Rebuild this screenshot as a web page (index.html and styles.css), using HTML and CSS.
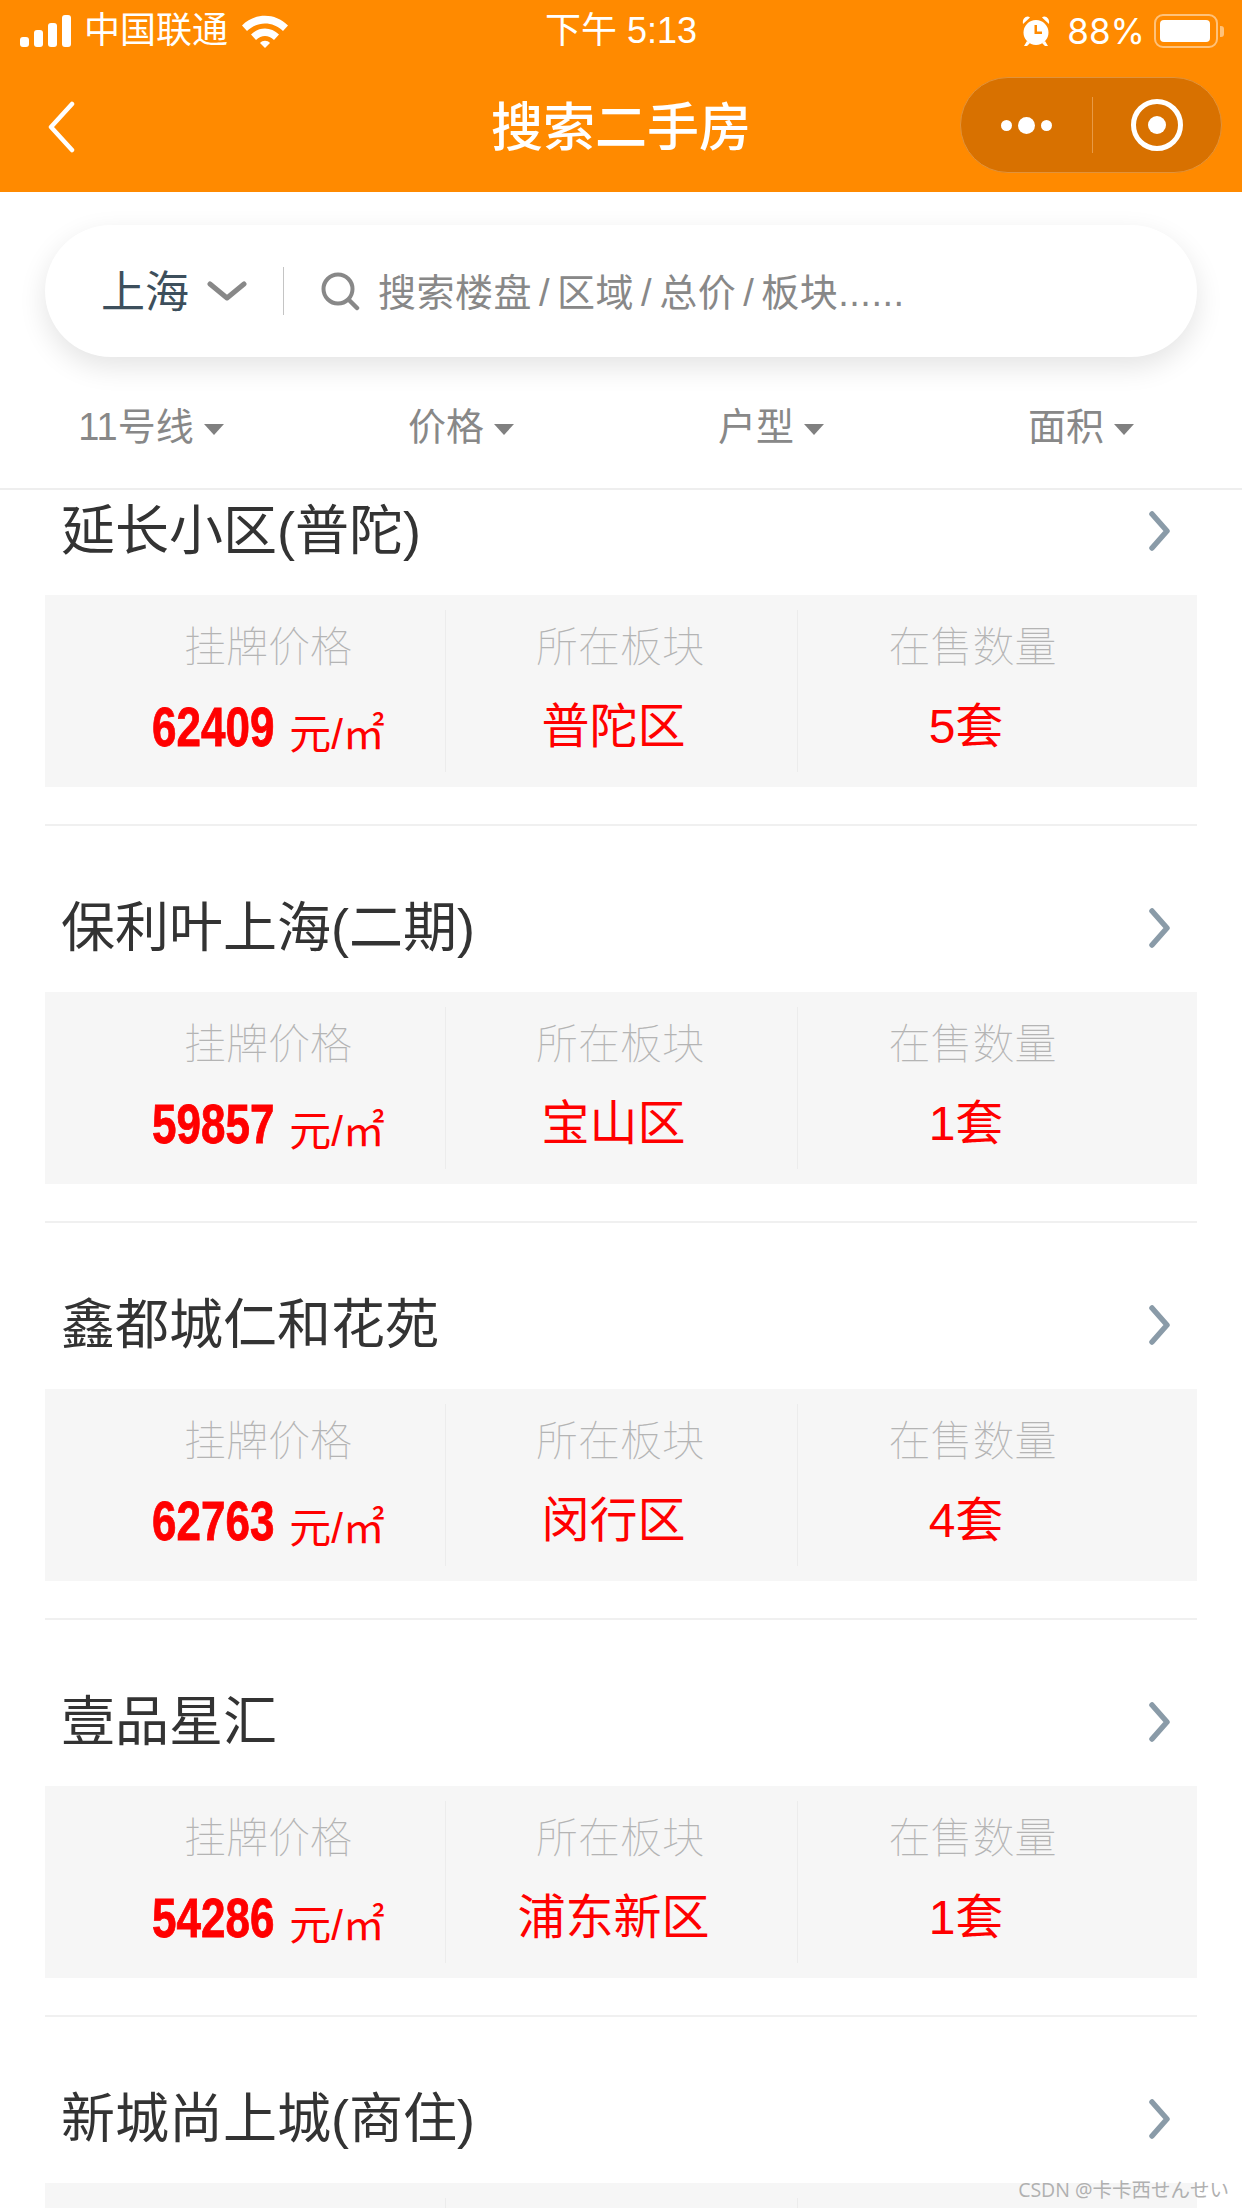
FILE: index.html

```html
<!DOCTYPE html>
<html lang="zh-CN">
<head>
  <meta charset="UTF-8" />
  <title>搜索二手房</title>
  <link rel="stylesheet" href="styles.css">
</head>
<body>
  <header class="top">
    <div class="status">
      <div class="status-left">
        <svg class="signal" width="51" height="32" viewBox="0 0 51 32"><rect x="0" y="22" width="9" height="10" rx="3"/><rect x="14" y="15" width="9" height="17" rx="3"/><rect x="28" y="8" width="9" height="24" rx="3"/><rect x="42" y="0" width="9" height="32" rx="3"/></svg>
        <span class="carrier">中国联通</span>
        <svg class="wifi" width="46" height="33" viewBox="0 0 46 33"><path d="M0 10.500C13-2.500 33-2.500 46 10.500L41 16C31 6 15 6 5 16Z"/><path d="M9 19.500C17 11.500 29 11.500 37 19.500L32 25C26.500 19.500 19.500 19.500 14 25Z"/><path d="M18 28C20.500 25 25.500 25 28 28L23 33Z"/></svg>
      </div>
      <span class="time">下午 5:13</span>
      <div class="status-right">
        <svg class="alarm" width="28" height="32" viewBox="0 0 28 32"><path d="M1 9L8 2.500C5 0 0 3 1 9ZM27 9L20 2.500C23 0 28 3 27 9Z"/><path fill-rule="evenodd" d="M14 5A12.500 12.500 0 1 1 14 30A12.500 12.500 0 1 1 14 5ZM12.500 10V19H20V16.500H15V10Z"/><path d="M5 26L2 31H5L8 28ZM23 26L26 31H23L20 28Z"/></svg>
        <span class="percent">88%</span>
        <div class="battery"><div class="battery-fill"></div></div>
        <div class="battery-tip"></div>
      </div>
    </div>
    <nav class="nav">
      <svg class="back" width="30" height="52" viewBox="0 0 30 52"><path d="M26 3L5 26L26 49" fill="none" stroke="#fff" stroke-width="4.500" stroke-linecap="round" stroke-linejoin="round"/></svg>
      <h1 class="nav-title">搜索二手房</h1>
      <div class="capsule">
        <div class="capsule-more"><i></i><b></b><i></i></div>
        <div class="capsule-line"></div>
        <div class="capsule-close"><span></span></div>
      </div>
    </nav>
  </header>

  <section class="search-wrap">
    <div class="search">
      <span class="city">上海</span>
      <svg class="city-arrow" width="40" height="20" viewBox="0 0 40 20"><path d="M3 3L20 17L37 3" fill="none" stroke="#888" stroke-width="5" stroke-linecap="round" stroke-linejoin="round"/></svg>
      <div class="search-line"></div>
      <svg class="search-icon" width="40" height="40" viewBox="0 0 40 40"><circle cx="18" cy="18" r="14.500" fill="none" stroke="#888" stroke-width="4"/><path d="M29 29L37 37" stroke="#888" stroke-width="4.500" stroke-linecap="round"/></svg>
      <span class="placeholder">搜索楼盘<span class="slash">/</span>区域<span class="slash">/</span>总价<span class="slash">/</span>板块......</span>
    </div>
  </section>

  <div class="filters">
    <div class="filter">11号线<span class="caret"></span></div>
    <div class="filter">价格<span class="caret"></span></div>
    <div class="filter">户型<span class="caret"></span></div>
    <div class="filter">面积<span class="caret"></span></div>
  </div>

  <main class="list">
    <div class="list-inner">
      <article class="item">
        <div class="item-head">
          <h2 class="item-name">延长小区(普陀)</h2>
          <svg class="more" width="22" height="40" viewBox="0 0 22 40"><path d="M3 3L18 20L3 37" fill="none" stroke="#8a9ba8" stroke-width="5.500" stroke-linecap="round" stroke-linejoin="round"/></svg>
        </div>
        <div class="info">
          <div class="cell"><div class="label">挂牌价格</div><div class="price"><span class="price-num">62409</span><span class="unit">元/㎡</span></div></div>
          <div class="cell"><div class="label">所在板块</div><div class="value">普陀区</div></div>
          <div class="cell"><div class="label">在售数量</div><div class="value">5套</div></div>
        </div>
      </article>
      <article class="item">
        <div class="item-head">
          <h2 class="item-name">保利叶上海(二期)</h2>
          <svg class="more" width="22" height="40" viewBox="0 0 22 40"><path d="M3 3L18 20L3 37" fill="none" stroke="#8a9ba8" stroke-width="5.500" stroke-linecap="round" stroke-linejoin="round"/></svg>
        </div>
        <div class="info">
          <div class="cell"><div class="label">挂牌价格</div><div class="price"><span class="price-num">59857</span><span class="unit">元/㎡</span></div></div>
          <div class="cell"><div class="label">所在板块</div><div class="value">宝山区</div></div>
          <div class="cell"><div class="label">在售数量</div><div class="value">1套</div></div>
        </div>
      </article>
      <article class="item">
        <div class="item-head">
          <h2 class="item-name">鑫都城仁和花苑</h2>
          <svg class="more" width="22" height="40" viewBox="0 0 22 40"><path d="M3 3L18 20L3 37" fill="none" stroke="#8a9ba8" stroke-width="5.500" stroke-linecap="round" stroke-linejoin="round"/></svg>
        </div>
        <div class="info">
          <div class="cell"><div class="label">挂牌价格</div><div class="price"><span class="price-num">62763</span><span class="unit">元/㎡</span></div></div>
          <div class="cell"><div class="label">所在板块</div><div class="value">闵行区</div></div>
          <div class="cell"><div class="label">在售数量</div><div class="value">4套</div></div>
        </div>
      </article>
      <article class="item">
        <div class="item-head">
          <h2 class="item-name">壹品星汇</h2>
          <svg class="more" width="22" height="40" viewBox="0 0 22 40"><path d="M3 3L18 20L3 37" fill="none" stroke="#8a9ba8" stroke-width="5.500" stroke-linecap="round" stroke-linejoin="round"/></svg>
        </div>
        <div class="info">
          <div class="cell"><div class="label">挂牌价格</div><div class="price"><span class="price-num">54286</span><span class="unit">元/㎡</span></div></div>
          <div class="cell"><div class="label">所在板块</div><div class="value">浦东新区</div></div>
          <div class="cell"><div class="label">在售数量</div><div class="value">1套</div></div>
        </div>
      </article>
      <article class="item">
        <div class="item-head">
          <h2 class="item-name">新城尚上城(商住)</h2>
          <svg class="more" width="22" height="40" viewBox="0 0 22 40"><path d="M3 3L18 20L3 37" fill="none" stroke="#8a9ba8" stroke-width="5.500" stroke-linecap="round" stroke-linejoin="round"/></svg>
        </div>
        <div class="info">
          <div class="cell"></div>
          <div class="cell"></div>
          <div class="cell"></div>
        </div>
      </article>
    </div>
  </main>

  <div class="watermark">CSDN @卡卡西せんせい</div>
</body>
</html>
```

FILE: styles.css

```css
* {
  box-sizing: border-box;
}
html, body {
  margin: 0;
  padding: 0;
}
body {
  position: relative;
  width: 1242px;
  height: 2208px;
  overflow: hidden;
  background: #fff;
  font-family: "Liberation Sans", "Noto Sans CJK SC", sans-serif;
}

/* orange top */
.top {
  height: 192px;
  background: #ff8a00;
  color: #fff;
}
.status {
  height: 62px;
  display: grid;
  grid-template-columns: 1fr auto 1fr;
  align-items: center;
  padding: 0 18px 0 20px;
}
.status svg {
  fill: #fff;
  display: block;
}
.status-left {
  display: flex;
  align-items: center;
}
.carrier {
  margin-left: 13px;
  font-size: 36px;
  line-height: 40px;
}
.wifi {
  margin-left: 14px;
}
.time {
  margin-right: 2px;
  font-size: 36px;
  line-height: 40px;
}
.status-right {
  display: flex;
  align-items: center;
  justify-content: flex-end;
}
.percent {
  margin-left: 17px;
  font-family: Inter, "Liberation Sans", sans-serif;
  font-size: 35px;
  line-height: 40px;
}
.battery {
  margin-left: 9px;
  width: 64px;
  height: 34px;
  padding: 4px;
  border: 2px solid #ffc27a;
  border-radius: 9px;
}
.battery-fill {
  width: 50px;
  height: 22px;
  background: #fff;
  border-radius: 4px;
}
.battery-tip {
  margin-left: 2px;
  width: 4px;
  height: 11px;
  background: #ffc27a;
  border-radius: 0 3px 3px 0;
}
.nav {
  height: 130px;
  display: grid;
  grid-template-columns: 1fr auto 1fr;
  align-items: center;
  padding: 0 20px;
}
.back {
  margin-left: 26px;
}
.nav-title {
  margin: 2px 0 0;
  font-size: 52px;
  line-height: 60px;
  font-weight: 500;
}
.capsule {
  justify-self: end;
  width: 262px;
  height: 96px;
  margin-bottom: 4px;
  display: flex;
  align-items: center;
  background: #d87100;
  border: 1px solid #e2933a;
  border-radius: 48px;
}
.capsule-more {
  width: 131px;
  display: flex;
  justify-content: center;
  align-items: center;
  gap: 6px;
}
.capsule-more i {
  width: 11px;
  height: 11px;
  background: #fff;
  border-radius: 50%;
}
.capsule-more b {
  width: 17px;
  height: 17px;
  background: #fff;
  border-radius: 50%;
}
.capsule-line {
  width: 1px;
  height: 56px;
  background: #e89a45;
}
.capsule-close {
  flex: 1;
  display: flex;
  justify-content: center;
}
.capsule-close span {
  width: 52px;
  height: 52px;
  display: flex;
  align-items: center;
  justify-content: center;
  border: 5px solid #fff;
  border-radius: 50%;
}
.capsule-close span::after {
  content: "";
  width: 18px;
  height: 18px;
  background: #fff;
  border-radius: 50%;
}

/* search */
.search-wrap {
  padding: 33px 45px 0;
}
.search {
  height: 132px;
  display: flex;
  align-items: center;
  padding-left: 56px;
  background: #fff;
  border-radius: 66px;
  box-shadow: 0 10px 28px rgba(0, 0, 0, 0.11);
}
.city {
  margin-bottom: 4px;
  font-size: 44px;
  color: #3d4f5c;
}
.city-arrow {
  margin-left: 18px;
}
.search-line {
  margin-left: 36px;
  width: 1px;
  height: 48px;
  background: #c4c4c4;
}
.search-icon {
  margin-left: 36px;
}
.placeholder {
  margin: 0 0 4px 18px;
  font-size: 38px;
  letter-spacing: 0.5px;
  color: #888;
}
.slash {
  margin: 0 7px;
}

/* filters */
.filters {
  height: 131px;
  width: 1240px;
  margin-left: -4px;
  padding-top: 2px;
  display: grid;
  grid-template-columns: repeat(4, 1fr);
  align-items: center;
}
.filter {
  display: flex;
  justify-content: center;
  align-items: center;
  font-size: 38px;
  color: #888;
}
.caret {
  margin: 12px 0 0 10px;
  border-left: 10px solid transparent;
  border-right: 10px solid transparent;
  border-top: 11px solid #808080;
}

/* list */
.list {
  height: 1720px;
  overflow: hidden;
  border-top: 2px solid #eee;
}
.list-inner {
  margin-top: -61px;
  padding: 0 45px;
}
.item {
  height: 397px;
  border-bottom: 2px solid #f0f0f0;
}
.item-head {
  height: 166px;
  padding: 60px 26px 22px 16px;
  display: flex;
  align-items: center;
  justify-content: space-between;
}
.item-name {
  margin: 0;
  font-size: 54px;
  line-height: 84px;
  font-weight: 400;
  color: #333;
}
.info {
  height: 192px;
  padding: 15px 47px 15px 49px;
  display: grid;
  grid-template-columns: repeat(3, 1fr);
  background: #f6f6f6;
}
.cell {
  border-right: 1px solid #ececec;
  text-align: center;
}
.cell:last-child {
  border-right: none;
}
.label {
  margin-top: 16px;
  padding-right: 3px;
  font-size: 42px;
  line-height: 44px;
  font-weight: 100;
  color: #b4b4b4;
}
.value {
  margin-top: 29px;
  padding-right: 16px;
  font-size: 48px;
  line-height: 56px;
  color: #f00;
}
.price {
  margin-top: 29px;
  height: 56px;
  padding-right: 2px;
  display: flex;
  justify-content: center;
  align-items: center;
  color: #f00;
}
.price-num {
  width: 121px;
  font-size: 55px;
  font-weight: 700;
  white-space: nowrap;
  text-align: left;
  transform: scaleX(0.8);
  transform-origin: left center;
  -webkit-text-stroke: 0.8px #f00;
}
.unit {
  margin: 6px 0 0 16px;
  font-size: 42px;
}
.watermark {
  position: absolute;
  right: 13px;
  bottom: 6px;
  font-family: "Open Sans", "Noto Sans CJK JP", sans-serif;
  font-size: 19.5px;
  line-height: 24px;
  color: #b0b0b0;
}
```
